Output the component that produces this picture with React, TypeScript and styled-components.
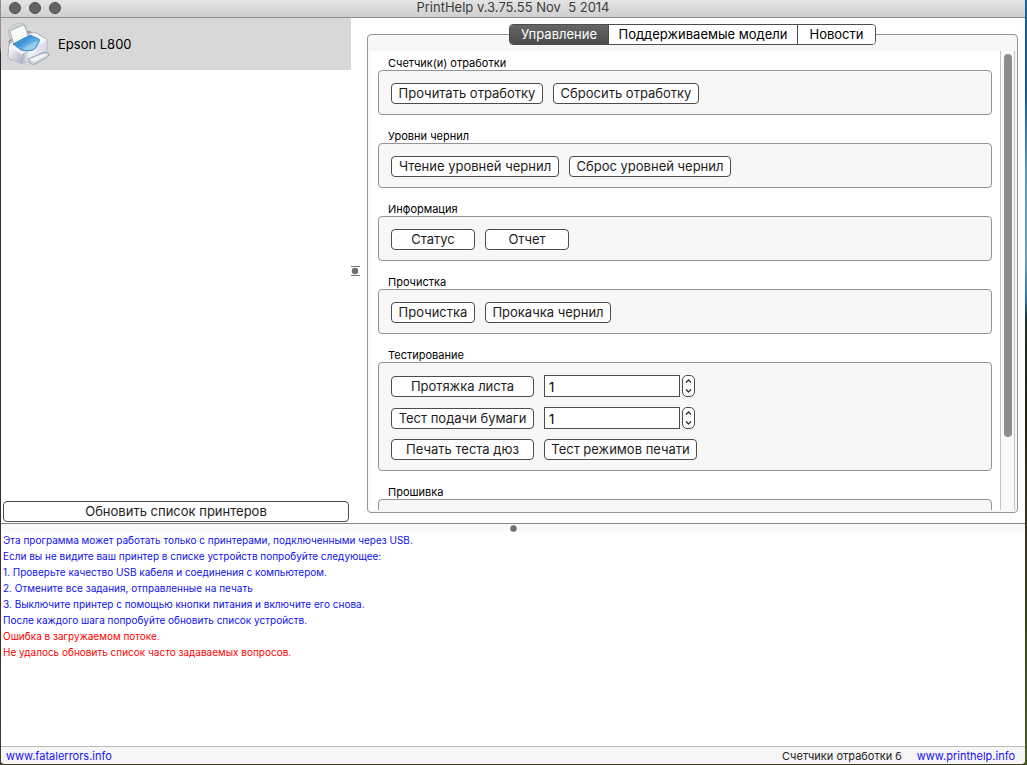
import React from "react";
import styled, { createGlobalStyle } from "styled-components";

const Global = createGlobalStyle`
  * { box-sizing: border-box; }
  body {
    margin: 0;
    font: 13px/16px Inter, "Noto Sans", sans-serif;
    color: #000;
    background: #33291f;
  }
  button, input { font: inherit; color: inherit; }
`;

const Desktop = styled.div`
  height: 100vh;
  padding: 0 2px 1px 1px;
  background:
    linear-gradient(#1c6390 0%, #145a88 12%, #5d93b8 22%, #6d9cba 34%, #3274a4 39%, #1e2b24 42%, #262417 56%, #3a342a 72%, #33401c 80%, #4b5c2c 100%) right / 2px 100% no-repeat,
    linear-gradient(#8c8f94 0%, #9a8b88 6%, #2c2c34 7%, #33302e 60%, #4a3a2c 100%) left / 1px 100% no-repeat,
    #3d3c24;
`;

const Window = styled.div`
  height: 100%;
  display: grid;
  grid-template-rows: 18px minmax(0, 505fr) minmax(0, 223fr) 18px;
  background: #fff;
  border-radius: 0 0 4px 4px;
  overflow: hidden;
`;

const TitleBar = styled.header`
  display: grid;
  grid-template-columns: 1fr auto 1fr;
  align-items: center;
  padding: 0 8px 2px;
  background: linear-gradient(#e4e4e4, #cfcfcf);
  border-bottom: 1px solid #8e8e8e;
`;

const Lights = styled.div`
  display: flex;
  gap: 8px;
`;

const Light = styled.button`
  width: 12px;
  height: 12px;
  margin: 0;
  padding: 0;
  border: 1px solid #4e4e4e;
  border-radius: 50%;
  background: #636363;
`;

const Title = styled.h1`
  margin: 0;
  font-size: 13px;
  line-height: 15px;
  font-weight: 400;
  color: #3c3c3c;
  white-space: pre;
`;

const Main = styled.main`
  display: grid;
  grid-template-columns: 350px 8px minmax(0, 1fr);
`;

const Sidebar = styled.aside`
  display: flex;
  flex-direction: column;
  justify-content: space-between;
`;

const PrinterList = styled.ul`
  margin: 0;
  padding: 0;
  list-style: none;
`;

const PrinterItem = styled.li`
  display: flex;
  align-items: center;
  gap: 8px;
  height: 52px;
  padding: 0 5px;
  background: #d8d8d8;
`;

const Button = styled.button<{ $width?: number }>`
  width: ${(p) => (p.$width ? `${p.$width}px` : "auto")};
  height: 21px;
  padding: 0;
  line-height: 17px;
  text-align: center;
  white-space: nowrap;
  color: #1c1c1c;
  background: #fff;
  border: 1px solid #4c4c4c;
  border-radius: 4px;
`;

const RefreshRow = styled.div`
  display: grid;
  padding: 0 2px 1px;
`;

const SideHandle = styled.div`
  display: grid;
  place-items: center;
`;

const Content = styled.div`
  display: flex;
  flex-direction: column;
  min-height: 0;
  padding: 6px 7px 10px 8px;
`;

const Tabs = styled.div`
  position: relative;
  display: flex;
  align-self: center;
  margin-bottom: -11px;
  border: 1px solid #4c4c4c;
  border-radius: 4px;
  overflow: hidden;
`;

const Tab = styled.button<{ $active?: boolean; $width: number }>`
  width: ${(p) => p.$width}px;
  height: 19px;
  padding: 0;
  border: 0;
  line-height: 17px;
  white-space: nowrap;
  color: ${(p) => (p.$active ? "#fff" : "#000")};
  background: ${(p) => (p.$active ? "linear-gradient(#666, #4a4a4a)" : "#fff")};
  & + & { border-left: 1px solid #4c4c4c; }
`;

const Panel = styled.div`
  flex: 1;
  min-height: 0;
  display: flex;
  padding: 16px 2px 2px;
  background: #f7f7f7;
  border: 1px solid #949494;
  border-radius: 4px;
`;

const Groups = styled.div`
  flex: 1;
  min-width: 0;
  display: flex;
  flex-direction: column;
  gap: 14px;
  padding: 5px 8px 0;
  background: #fff;
  overflow: hidden;
`;

const Track = styled.div`
  width: 15px;
  padding: 3px;
  background: #fafafa;
  border: solid #c4c4c4;
  border-width: 0 1px;
`;

const Thumb = styled.div`
  width: 8px;
  height: 84.5%;
  border-radius: 4px;
  background: #8d8d8d;
`;

const GroupTitle = styled.h2`
  margin: 0;
  padding-left: 10px;
  font-size: 11px;
  line-height: 14px;
  font-weight: 400;
`;

const GroupBox = styled.div`
  display: flex;
  flex-direction: column;
  gap: 10px;
  min-height: 45px;
  padding: 12px 12px 10px;
  background: #f7f7f7;
  border: 1px solid #949494;
  border-radius: 4px;
`;

const Row = styled.div`
  display: flex;
  align-items: flex-end;
  gap: 10px;
`;

const Spin = styled.div`
  display: flex;
  gap: 2px;
`;

const SpinInput = styled.input`
  width: 136px;
  height: 22px;
  padding: 2px 4px 0;
  background: #fff;
  border: 1px solid #4c4c4c;
  border-radius: 0;
  appearance: textfield;
  &::-webkit-inner-spin-button { appearance: none; margin: 0; }
`;

const Stepper = styled.div`
  display: flex;
  flex-direction: column;
  width: 13px;
  height: 22px;
  border: 1px solid #4c4c4c;
  border-radius: 5px;
  background: #fff;
  overflow: hidden;
`;

const Step = styled.button`
  flex: 1;
  display: grid;
  place-items: center;
  padding: 0;
  border: 0;
  background: none;
`;

const Log = styled.section`
  display: flex;
  flex-direction: column;
  border-top: 1px solid #868686;
  background: linear-gradient(#fafafa 8px, #fff 8px);
`;

const LogHandle = styled.div`
  display: grid;
  place-items: center;
  height: 8px;
`;

const LogLine = styled.p<{ $error?: boolean }>`
  margin: 0;
  padding-left: 2px;
  font-size: 10px;
  line-height: 16px;
  color: ${(p) => (p.$error ? "#f00" : "#1010f0")};
`;

const Footer = styled.footer`
  display: flex;
  align-items: center;
  gap: 15px;
  padding: 0 10px 0 5px;
  font-size: 11px;
  line-height: 16px;
  color: #222;
  background: #f6f6f6;
  border-top: 1px solid #bcbcbc;
`;

const Link = styled.a`
  color: #1a10f5;
  text-decoration: none;
  &:first-child { margin-right: auto; }
`;

const PrinterIcon = () => (
  <svg width="44" height="44" viewBox="0 0 44 44" aria-hidden="true">
    <defs>
      <linearGradient id="glass" x1="0" y1="0" x2="1" y2="1">
        <stop offset="0" stopColor="#3d96d8" />
        <stop offset=".45" stopColor="#4a9fdd" />
        <stop offset="1" stopColor="#a5d8f6" />
      </linearGradient>
      <linearGradient id="side" x1="0" y1="0" x2="1" y2="1">
        <stop offset="0" stopColor="#fdfdff" />
        <stop offset="1" stopColor="#a9abbd" />
      </linearGradient>
      <linearGradient id="front" x1="0" y1="0" x2="1" y2="0">
        <stop offset="0" stopColor="#aeb0c2" />
        <stop offset=".3" stopColor="#f4f4fa" />
        <stop offset="1" stopColor="#d4d6e2" />
      </linearGradient>
    </defs>
    <path d="M2 10C3 4 9 1 15 1q4 0 5 4l3 9-18 5z" fill="#cdd4d6" stroke="#b4bcc0" strokeWidth=".8" />
    <path d="M21 13q0-4 3-3 2 1 1 5M4 22q-2-4 2-4" fill="none" stroke="#8d959b" strokeWidth="1.6" />
    <path d="M3 23q1-3 5-4l17-8q2-1 5 0l9 5q2 1 2 4v9L20 40q-3 2-5 1L4 37q-2-1-2-3z" fill="#f5f5fa" stroke="#9da0ad" strokeWidth=".8" />
    <path d="M3 25l11 6q2 1 2 4v7L4 36q-1-1-1-3z" fill="url(#side)" />
    <path d="M16 33q0-2 3-3l22-11v10L20 40l-4 1z" fill="url(#front)" />
    <path d="M4 9l13-6q1 0 2 2l4 11-15 7z" fill="#fbfbf9" stroke="#a2a6a9" strokeWidth=".8" />
    <path d="M7 22l17-9 9 4q1 1 0 3-3 7-6 8-6 2-12 0z" fill="url(#glass)" stroke="#2f78b4" strokeWidth=".8" />
    <path d="M8 22l16-8 4 2q-7 1-11 5l-4 4z" fill="#2e86ca" opacity=".35" />
    <path d="M17 28q3-6 15-9-3 7-6 8-4 1-9 1z" fill="#b9e2fa" opacity=".5" />
    <path d="M22 37l14-6q7-1 7 1 0 2-3 4l-11 6q-3 1-5-1z" fill="#d4d7dc" stroke="#8f959d" strokeWidth=".8" />
    <path d="M24 37l13-5q4 0 4 1l-13 7z" fill="#f4f5f7" />
  </svg>
);

const Chevron = ({ up }: { up?: boolean }) => (
  <svg width="7" height="4" viewBox="0 0 7 4" aria-hidden="true">
    <path d={up ? "M1 3.5 3.5 1 6 3.5" : "M1 .5 3.5 3 6 .5"} fill="none" stroke="#333" strokeWidth="1.3" />
  </svg>
);

const SpinBox = ({ label }: { label: string }) => (
  <Spin>
    <SpinInput type="number" defaultValue={1} aria-label={label} />
    <Stepper>
      <Step aria-label="Увеличить"><Chevron up /></Step>
      <Step aria-label="Уменьшить"><Chevron /></Step>
    </Stepper>
  </Spin>
);

const groups: { title: string; buttons: [string, number][] }[] = [
  { title: "Счетчик(и) отработки", buttons: [["Прочитать отработку", 152], ["Сбросить отработку", 146]] },
  { title: "Уровни чернил", buttons: [["Чтение уровней чернил", 168], ["Сброс уровней чернил", 162]] },
  { title: "Информация", buttons: [["Статус", 84], ["Отчет", 84]] },
  { title: "Прочистка", buttons: [["Прочистка", 84], ["Прокачка чернил", 126]] },
];

const messages = [
  "Эта программа может работать только с принтерами, подключенными через USB.",
  "Если вы не видите ваш принтер в списке устройств попробуйте следующее:",
  "1. Проверьте качество USB кабеля и соединения с компьютером.",
  "2. Отмените все задания, отправленные на печать",
  "3. Выключите принтер с помощью кнопки питания и включите его снова.",
  "После каждого шага попробуйте обновить список устройств.",
];

const errors = ["Ошибка в загружаемом потоке.", "Не удалось обновить список часто задаваемых вопросов."];

export default function App() {
  return (
    <Desktop>
      <Global />
      <Window>
        <TitleBar>
          <Lights>
            <Light aria-label="Закрыть" />
            <Light aria-label="Свернуть" />
            <Light aria-label="Развернуть" />
          </Lights>
          <Title>{"PrintHelp v.3.75.55 Nov  5 2014"}</Title>
        </TitleBar>
        <Main>
          <Sidebar>
            <PrinterList>
              <PrinterItem><PrinterIcon />Epson L800</PrinterItem>
            </PrinterList>
            <RefreshRow><Button>Обновить список принтеров</Button></RefreshRow>
          </Sidebar>
          <SideHandle>
            <svg width="9" height="12" viewBox="0 0 9 12" aria-hidden="true">
              <path d="M0 1.5h9M0 10.5h9" stroke="#777" />
              <circle cx="4" cy="6" r="3.2" fill="#6e6e6e" />
            </svg>
          </SideHandle>
          <Content>
            <Tabs role="tablist">
              <Tab role="tab" aria-selected $active $width={98}>Управление</Tab>
              <Tab role="tab" $width={189}>Поддерживаемые модели</Tab>
              <Tab role="tab" $width={78}>Новости</Tab>
            </Tabs>
            <Panel role="tabpanel">
              <Groups>
                {groups.map((g) => (
                  <section key={g.title}>
                    <GroupTitle>{g.title}</GroupTitle>
                    <GroupBox>
                      <Row>
                        {g.buttons.map(([text, width]) => <Button key={text} $width={width}>{text}</Button>)}
                      </Row>
                    </GroupBox>
                  </section>
                ))}
                <section>
                  <GroupTitle>Тестирование</GroupTitle>
                  <GroupBox>
                    <Row>
                      <Button $width={143}>Протяжка листа</Button>
                      <SpinBox label="Протяжка листа" />
                    </Row>
                    <Row>
                      <Button $width={143}>Тест подачи бумаги</Button>
                      <SpinBox label="Тест подачи бумаги" />
                    </Row>
                    <Row>
                      <Button $width={143}>Печать теста дюз</Button>
                      <Button $width={153}>Тест режимов печати</Button>
                    </Row>
                  </GroupBox>
                </section>
                <section>
                  <GroupTitle>Прошивка</GroupTitle>
                  <GroupBox />
                </section>
              </Groups>
              <Track><Thumb /></Track>
            </Panel>
          </Content>
        </Main>
        <Log>
          <LogHandle>
            <svg width="7" height="7" viewBox="0 0 7 7" aria-hidden="true">
              <circle cx="3.5" cy="3.5" r="3.2" fill="#6e6e6e" />
            </svg>
          </LogHandle>
          {messages.map((m) => <LogLine key={m}>{m}</LogLine>)}
          {errors.map((m) => <LogLine key={m} $error>{m}</LogLine>)}
        </Log>
        <Footer>
          <Link href="#fatalerrors">www.fatalerrors.info</Link>
          <span>Счетчики отработки б</span>
          <Link href="#printhelp">www.printhelp.info</Link>
        </Footer>
      </Window>
    </Desktop>
  );
}
